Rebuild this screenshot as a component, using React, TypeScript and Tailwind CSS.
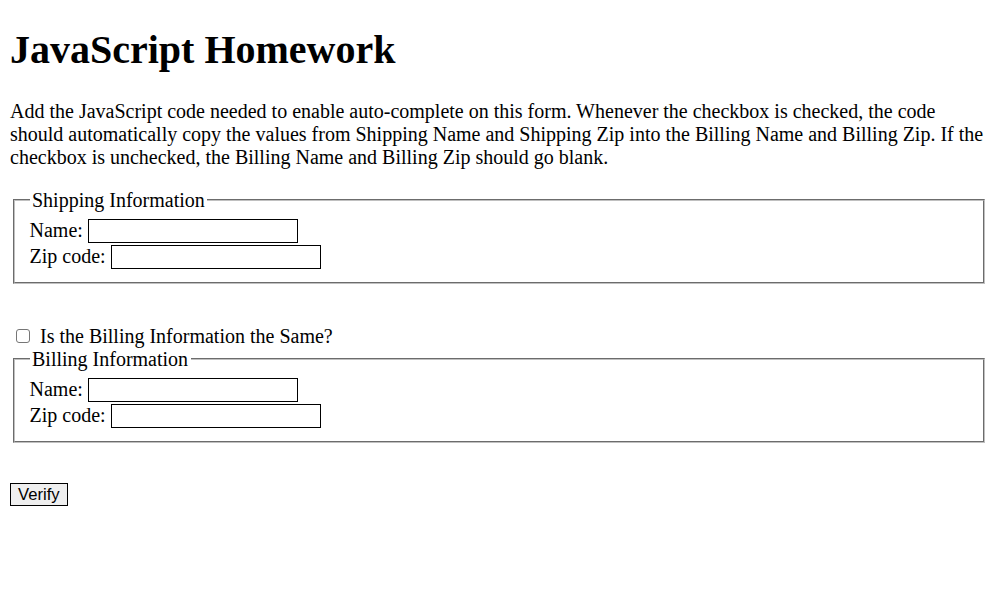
import React from 'react';

const FieldRow = ({ label }: { label: string }) => (
  <div className="flex items-center h-[26px]">
    <label className="whitespace-pre">{label} </label>
    <input type="text" className="w-[210px] h-[24px] border border-black bg-white outline-none" />
  </div>
);

const InfoFieldset = ({ title }: { title: string }) => (
  <fieldset className="mx-[2.5px] px-[15px] pt-[6px] pb-[12px] border-2 [border-style:groove] border-[#c0c0c0]">
    <legend className="px-[2.5px] leading-[23px]">{title}</legend>
    <FieldRow label="Name:" />
    <FieldRow label="Zip code:" />
  </fieldset>
);

export default function App() {
  return (
    <div className="min-h-screen bg-white text-black px-[10px] pt-[0.1px] font-['Liberation_Serif',_'Times_New_Roman',_serif] text-[20px] leading-[23px]">
      {/* Heading */}
      <h1 className="mt-[26.8px] text-[40px] leading-[46px] font-bold">JavaScript Homework</h1>

      <p className="mt-[26.8px] mb-[20px]">
        Add the JavaScript code needed to enable auto-complete on this form. Whenever the checkbox is checked, the code
        should automatically copy the values from Shipping Name and Shipping Zip into the Billing Name and Billing Zip. If
        the checkbox is unchecked, the Billing Name and Billing Zip should go blank.
      </p>

      <form>
        <InfoFieldset title="Shipping Information" />

        {/* Same-as-shipping toggle */}
        <div className="mt-[41px] flex items-center h-[23px]">
          <input
            type="checkbox"
            className="appearance-none ml-[6px] mr-[10px] w-[14px] h-[14px] border border-[#767676] rounded-[3px] bg-white"
          />
          <span>Is the Billing Information the Same?</span>
        </div>

        <InfoFieldset title="Billing Information" />

        <button
          type="button"
          className="mt-[40px] h-[23px] px-[7px] bg-[#efefef] border border-black font-['Liberation_Sans',_Arial,_sans-serif] text-[16.67px] leading-[19px]"
        >
          Verify
        </button>
      </form>
    </div>
  );
}
